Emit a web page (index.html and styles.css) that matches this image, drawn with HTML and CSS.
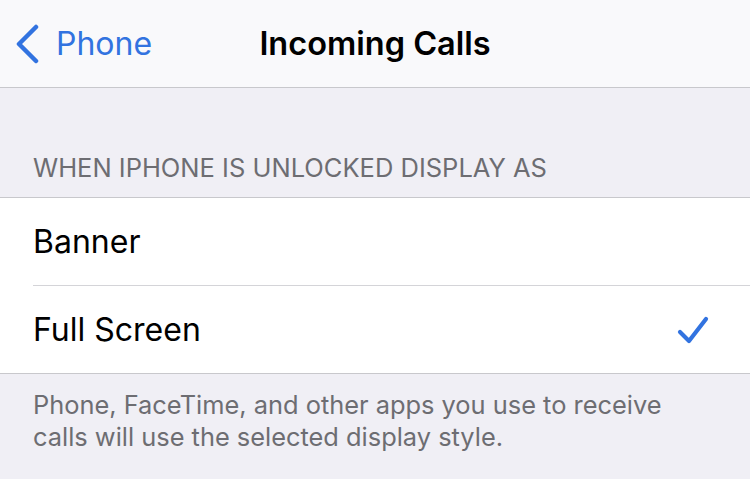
FILE: index.html
```html
<!DOCTYPE html>
<html lang="en">
<head>
    <meta charset="UTF-8">
    <meta name="viewport" content="width=device-width, initial-scale=1.0">
    <title>Incoming Calls</title>
    <link rel="stylesheet" href="styles.css">
</head>
<body>
    <header class="navbar">
        <a class="back" href="#">
            <svg class="chevron" width="26" height="40" viewBox="0 0 26 40">
                <path d="M20 3 L3 20 L20 37" fill="none" stroke="currentColor" stroke-width="4.5" stroke-linecap="round" stroke-linejoin="round"/>
            </svg>
            <span>Phone</span>
        </a>
        <h1 class="title">Incoming Calls</h1>
        <div></div>
    </header>

    <main class="settings">
        <h2 class="group-header">WHEN IPHONE IS UNLOCKED DISPLAY AS</h2>
        <ul class="group">
            <li class="row"><span>Banner</span></li>
            <li class="row selected">
                <span>Full Screen</span>
                <svg class="check" width="34" height="30" viewBox="0 0 34 30">
                    <path d="M4 17 L13 26 L30 4" fill="none" stroke="currentColor" stroke-width="4.2" stroke-linecap="round" stroke-linejoin="round"/>
                </svg>
            </li>
        </ul>
        <p class="group-footer">Phone, FaceTime, and other apps you use to receive calls will use the selected display style.</p>
    </main>
</body>
</html>
```

FILE: styles.css
```css
body {
    margin: 0;
    font-family: 'Inter', 'Noto Sans', sans-serif;
    background: #f0eff5;
    color: #000;
}
.navbar {
    height: 87px;
    background: #f9f9fb;
    border-bottom: 1px solid #c8c8cc;
    display: grid;
    grid-template-columns: 1fr auto 1fr;
    align-items: center;
}
.back {
    display: flex;
    align-items: center;
    gap: 14px;
    padding-left: 16px;
    color: #3273e0;
    text-decoration: none;
    font-size: 32px;
}
.title {
    margin: 0;
    font-size: 32.5px;
    font-weight: 600;
}
.settings {
    padding-top: 65px;
}
.group-header {
    margin: 0 0 14px;
    padding-left: 33px;
    font-size: 25.5px;
    line-height: 30px;
    font-weight: 400;
    color: #6d6d72;
}
.group {
    list-style: none;
    margin: 0;
    padding: 0 0 0 33px;
    background: #fff;
    border-top: 1px solid #c8c8cc;
    border-bottom: 1px solid #c8c8cc;
}
.row {
    height: 87px;
    display: flex;
    align-items: center;
    justify-content: space-between;
    padding-right: 40px;
    font-size: 32px;
}
.row + .row {
    border-top: 1px solid #d4d4d8;
}
.check {
    color: #3273e0;
}
.group-footer {
    margin: 15px 0 0;
    padding: 0 60px 0 33px;
    font-size: 25.4px;
    line-height: 32px;
    color: #6d6d72;
}
```
